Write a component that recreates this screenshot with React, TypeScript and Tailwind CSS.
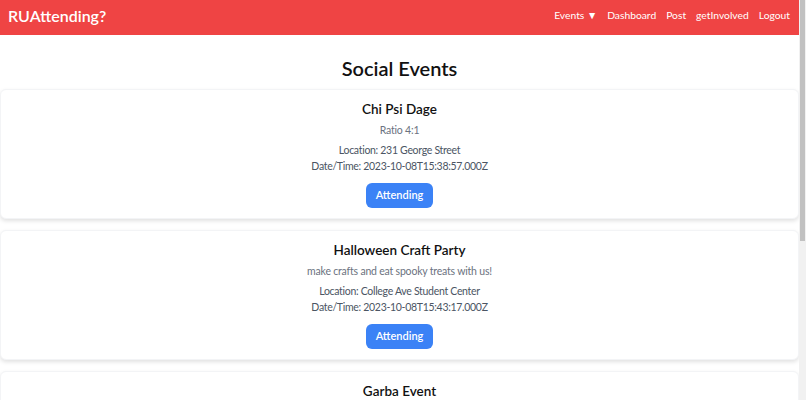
const events = [
  {
    title: "Chi Psi Dage",
    description: "Ratio 4:1",
    location: "231 George Street",
    dateTime: "2023-10-08T15:38:57.000Z",
  },
  {
    title: "Halloween Craft Party",
    description: "make crafts and eat spooky treats with us!",
    location: "College Ave Student Center",
    dateTime: "2023-10-08T15:43:17.000Z",
  },
  {
    title: "Garba Event",
    description: "Dance the night away",
    location: "Busch Student Center",
    dateTime: "2023-10-08T16:02:41.000Z",
  },
];

function Navbar() {
  return (
    <nav className="flex h-[35px] shrink-0 items-center justify-between bg-[#ef4444] pb-[4px] pl-[8px] pr-[9px] text-white">
      <span className="text-[16px] font-semibold">RUAttending?</span>
      <div className="flex items-center gap-[10px] text-[10.3px]">
        <span>Events ▼</span>
        <span>Dashboard</span>
        <span>Post</span>
        <span>getInvolved</span>
        <span>Logout</span>
      </div>
    </nav>
  );
}

function EventCard({ event }: { event: (typeof events)[number] }) {
  return (
    <div className="flex flex-col items-center rounded-md border border-gray-100 bg-white pb-[10px] pt-[9px] text-center shadow-[0_2px_4px_rgba(0,0,0,0.12)]">
      <h3 className="text-[13.5px] font-semibold leading-[20px] text-[#111]">
        {event.title}
      </h3>
      <p className="mt-[3px] text-[10.5px] leading-[16px] tracking-[-0.2px] text-[#6b7280]">
        {event.description}
      </p>
      <div className="mt-[4px] text-[10.5px] leading-[16px] tracking-[-0.3px] text-[#4b5563]">
        <p>Location: {event.location}</p>
        <p>Date/Time: {event.dateTime}</p>
      </div>
      <button className="mt-[9px] h-[25px] w-[67px] rounded-md bg-[#3b82f6] text-[11px] font-semibold text-white">
        Attending
      </button>
    </div>
  );
}

export default function App() {
  return (
    <div
      className="flex h-[400px] w-full overflow-hidden bg-white"
      style={{ fontFamily: 'Lato, "Open Sans", sans-serif' }}
    >
      <div className="flex min-w-0 flex-1 flex-col overflow-hidden">
        <Navbar />
        <h1 className="pt-[19px] text-center text-[20px] font-semibold leading-[28px] text-[#111]">
          Social Events
        </h1>
        <div className="mt-[7px] flex flex-col gap-[11px]">
          {events.map((event) => (
            <EventCard key={event.title} event={event} />
          ))}
        </div>
      </div>
      {/* scrollbar */}
      <div className="flex w-[7px] shrink-0 flex-col bg-[#f1f1f1]">
        <div className="mx-auto h-[241px] w-[5px] bg-[#c1c1c1]" />
      </div>
    </div>
  );
}
